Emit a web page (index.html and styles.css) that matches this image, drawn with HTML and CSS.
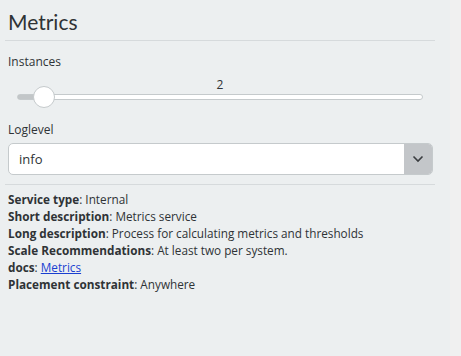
FILE: index.html
```html
<!DOCTYPE html>
<html lang="en">
<head>
  <meta charset="UTF-8" />
  <title>Metrics</title>
  <link rel="stylesheet" href="styles.css">
</head>
<body>
  <div class="panel">
    <h2>Metrics</h2>

    <div class="field">
      <label>Instances</label>
      <div class="slider">
        <div class="slider-value">2</div>
        <div class="track">
          <div class="track-fill"></div>
          <div class="thumb"></div>
        </div>
      </div>
    </div>

    <div class="field">
      <label>Loglevel</label>
      <div class="select">
        <span class="select-text">info</span>
        <span class="select-btn">
          <svg width="12" height="8" viewBox="0 0 12 8"><path d="M1.5 1.5 L6 6 L10.5 1.5" fill="none" stroke="#3a3d40" stroke-width="1.6"/></svg>
        </span>
      </div>
    </div>

    <div class="info">
      <p><b>Service type</b>: Internal</p>
      <p><b>Short description</b>: Metrics service</p>
      <p><b>Long description</b>: Process for calculating metrics and thresholds</p>
      <p><b>Scale Recommendations</b>: At least two per system.</p>
      <p><b>docs</b>: <a href="#">Metrics</a></p>
      <p><b>Placement constraint</b>: Anywhere</p>
    </div>
  </div>
</body>
</html>
```

FILE: styles.css
```css
body {
  margin: 0;
  background-color: #f0f0f0;
  font-family: 'Open Sans', sans-serif;
  color: #2f3336;
}

.panel {
  width: 450px;
  height: 356px;
  box-sizing: border-box;
  background-color: #eceff0;
  padding: 0 8px;
}

h2 {
  font-family: Lato, sans-serif;
  font-size: 21px;
  font-weight: 400;
  margin: 0 -3px;
  padding: 9px 3px 6px;
  width: 424px;
  border-bottom: 1px solid #d6dadc;
  color: #2f3336;
}

.field {
  margin-top: 13px;
}

.field label {
  display: block;
  font-size: 12px;
  line-height: 16px;
}

.slider {
  padding: 8px 19px 0 9px;
}

.slider-value {
  text-align: center;
  font-size: 12px;
  line-height: 14px;
}

.track {
  position: relative;
  height: 4px;
  margin-top: 2px;
  margin-bottom: 22px;
  border: 1px solid #c5cacc;
  border-radius: 3px;
  background-color: #fff;
}

.track-fill {
  width: 26px;
  height: 100%;
  background-color: #c2c6c8;
}

.thumb {
  position: absolute;
  left: 15px;
  top: -9px;
  width: 20px;
  height: 20px;
  border-radius: 50%;
  background-color: #fff;
  border: 1px solid #c5cacc;
}

.select {
  display: flex;
  height: 32px;
  margin-top: 5px;
  width: 425px;
  box-sizing: border-box;
  border: 1px solid #c5cacc;
  border-radius: 5px;
  background-color: #fff;
  overflow: hidden;
}

.select-text {
  flex: 1;
  padding-left: 10px;
  font-size: 13px;
  line-height: 30px;
}

.select-btn {
  width: 28px;
  background-color: #c3c6c9;
  display: flex;
  align-items: center;
  justify-content: center;
}

.info {
  margin: 9px -3px 0;
  padding: 6px 3px 0;
  width: 424px;
  border-top: 1px solid #d6dadc;
}

.info p {
  margin: 0;
  font-size: 11.75px;
  line-height: 17px;
}

.info a {
  color: #1a3fd0;
}
```
